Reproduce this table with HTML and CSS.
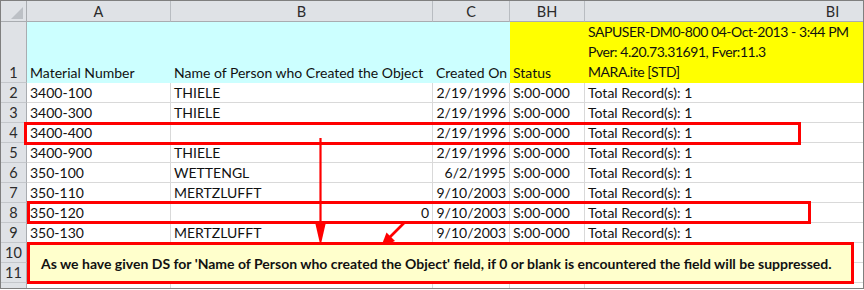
FILE: index.html
```html
<!DOCTYPE html>
<html>
<head>
<meta charset="utf-8">
<link rel="stylesheet" href="styles.css">
</head>
<body>
<div class="frame">
  <div class="sheet">
    <div class="corner"><span class="tri"></span></div>
    <div class="ch">A</div>
    <div class="ch">B</div>
    <div class="ch">C</div>
    <div class="ch">BH</div>
    <div class="ch">BI</div>

    <div class="rh">1</div>
    <div class="c cy">Material Number</div>
    <div class="c cy">Name of Person who Created the Object</div>
    <div class="c cy">Created On</div>
    <div class="c ye">Status</div>
    <div class="c ye multi"><span>SAPUSER-DM0-800 04-Oct-2013 - 3:44 PM</span><span>Pver: 4.20.73.31691, Fver:11.3</span><span>MARA.ite [STD]</span></div>

    <div class="rh">2</div>
    <div class="c">3400-100</div><div class="c">THIELE</div><div class="c r">2/19/1996</div><div class="c">S:00-000</div><div class="c">Total Record(s): 1</div>

    <div class="rh">3</div>
    <div class="c">3400-300</div><div class="c">THIELE</div><div class="c r">2/19/1996</div><div class="c">S:00-000</div><div class="c">Total Record(s): 1</div>

    <div class="rh">4</div>
    <div class="c">3400-400</div><div class="c"></div><div class="c r">2/19/1996</div><div class="c">S:00-000</div><div class="c">Total Record(s): 1</div>

    <div class="rh">5</div>
    <div class="c">3400-900</div><div class="c">THIELE</div><div class="c r">2/19/1996</div><div class="c">S:00-000</div><div class="c">Total Record(s): 1</div>

    <div class="rh">6</div>
    <div class="c">350-100</div><div class="c">WETTENGL</div><div class="c r">6/2/1995</div><div class="c">S:00-000</div><div class="c">Total Record(s): 1</div>

    <div class="rh">7</div>
    <div class="c">350-110</div><div class="c">MERTZLUFFT</div><div class="c r">9/10/2003</div><div class="c">S:00-000</div><div class="c">Total Record(s): 1</div>

    <div class="rh">8</div>
    <div class="c">350-120</div><div class="c r">0</div><div class="c r">9/10/2003</div><div class="c">S:00-000</div><div class="c">Total Record(s): 1</div>

    <div class="rh">9</div>
    <div class="c">350-130</div><div class="c">MERTZLUFFT</div><div class="c r">9/10/2003</div><div class="c">S:00-000</div><div class="c">Total Record(s): 1</div>

    <div class="rh">10</div>
    <div class="c"></div><div class="c"></div><div class="c"></div><div class="c"></div><div class="c"></div>

    <div class="rh">11</div>
    <div class="c"></div><div class="c"></div><div class="c"></div><div class="c"></div><div class="c"></div>

    <div class="rh last"></div>
    <div class="c"></div><div class="c"></div><div class="c"></div><div class="c"></div><div class="c"></div>
  </div>

  <div class="hl hl-row4"></div>
  <div class="hl hl-row8"></div>

  <svg class="arrows" width="864" height="290" viewBox="0 0 864 290">
    <line x1="320.5" y1="138" x2="320.5" y2="232" stroke="#ff0000" stroke-width="2.2"/>
    <polygon points="315,222 326,222 320.5,246" fill="#ff0000"/>
    <line x1="405" y1="222" x2="389" y2="238" stroke="#ff0000" stroke-width="2.6"/>
    <polygon points="395,241 386.5,232.5 381,247" fill="#ff0000"/>
  </svg>

  <div class="note">As we have given DS for 'Name of Person who created the Object' field, if 0 or blank is encountered the field will be suppressed.</div>
</div>
</body>
</html>
```

FILE: styles.css
```css
html, body {
  margin: 0;
  padding: 0;
  background: #ffffff;
}

.frame {
  position: relative;
  width: 864px;
  height: 289px;
  box-sizing: border-box;
  border: 1px solid #7f7f7f;
  overflow: hidden;
  font-family: "Lato", "Liberation Sans", sans-serif;
  font-size: 14px;
  color: #111111;
}

.sheet {
  display: grid;
  grid-template-columns: 26px 144px 262px 77px 75px 496px;
  grid-template-rows: 21px 61px repeat(11, 20px);
}

.corner {
  position: relative;
  background: #dfe2e6;
  border-right: 1px solid #a9acb0;
  border-bottom: 1px solid #a9acb0;
  box-sizing: border-box;
}

.tri {
  position: absolute;
  right: 3px;
  bottom: 2px;
  width: 0;
  height: 0;
  border-left: 12px solid transparent;
  border-bottom: 12px solid #bcc0c5;
}

.ch {
  background: #dfe2e6;
  border-right: 1px solid #b8bcc1;
  border-bottom: 1px solid #a9acb0;
  box-sizing: border-box;
  display: flex;
  align-items: center;
  justify-content: center;
  color: #2b2b2b;
  font-size: 14.5px;
}

.rh {
  background: #dfe2e6;
  border-right: 1px solid #a9acb0;
  border-bottom: 1px solid #c4c7cb;
  box-sizing: border-box;
  display: flex;
  align-items: flex-end;
  justify-content: center;
  color: #2b2b2b;
  line-height: 19px;
  font-size: 14.5px;
}

.c {
  border-right: 1px solid #d9d9d9;
  border-bottom: 1px solid #d9d9d9;
  box-sizing: border-box;
  display: flex;
  align-items: flex-end;
  padding: 0 3px;
  line-height: 19px;
  white-space: nowrap;
  overflow: visible;
}

.c.r {
  justify-content: flex-end;
}

.cy {
  background: #ccffff;
  border-right-color: #ccffff;
  border-bottom-color: #ccffff;
}

.ye {
  background: #ffff00;
  border-right-color: #ffff00;
  border-bottom-color: #ffff00;
}

.multi {
  flex-direction: column;
  align-items: flex-start;
  justify-content: flex-end;
  padding-bottom: 0;
  letter-spacing: -0.45px;
}

.multi span {
  line-height: 20px;
}

.hl {
  position: absolute;
  box-sizing: border-box;
  border: 3px solid #ff0000;
}

.hl-row4 {
  left: 23px;
  top: 121px;
  width: 777px;
  height: 23px;
}

.hl-row8 {
  left: 26px;
  top: 200px;
  width: 784px;
  height: 23px;
}

.arrows {
  position: absolute;
  left: -1px;
  top: -1px;
  pointer-events: none;
}

.note {
  position: absolute;
  left: 26px;
  top: 241px;
  width: 827px;
  height: 42px;
  box-sizing: border-box;
  border: 3px solid #ff0000;
  background: #ffffcc;
  display: flex;
  align-items: center;
  padding-left: 11px;
  font-weight: bold;
  font-size: 14px;
  color: #111111;
  white-space: nowrap;
}
```
